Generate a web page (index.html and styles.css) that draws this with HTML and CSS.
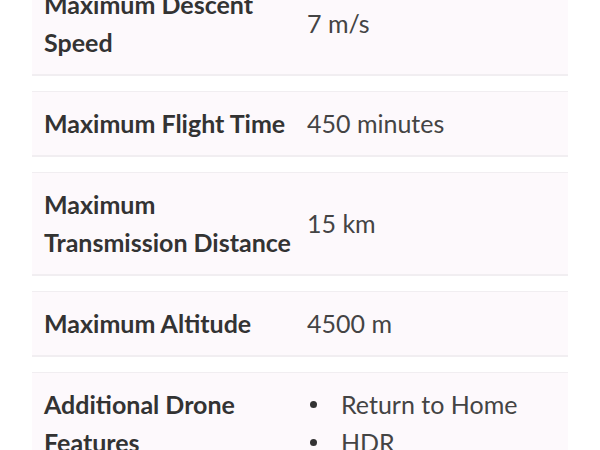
FILE: index.html
```html
<!DOCTYPE html>
<html lang="en">
  <head>
    <meta charset="UTF-8" />
    <meta name="viewport" content="width=device-width, initial-scale=1.0" />
    <title>Drone Specifications</title>
    <link rel="stylesheet" href="styles.css">
  </head>
  <body>
    <div class="specs">
      <div class="spec-row">
        <div class="spec-label">Maximum Descent Speed</div>
        <div class="spec-value">7 m/s</div>
      </div>
      <div class="spec-row">
        <div class="spec-label">Maximum Flight Time</div>
        <div class="spec-value">450 minutes</div>
      </div>
      <div class="spec-row">
        <div class="spec-label">Maximum Transmission Distance</div>
        <div class="spec-value">15 km</div>
      </div>
      <div class="spec-row">
        <div class="spec-label">Maximum Altitude</div>
        <div class="spec-value">4500 m</div>
      </div>
      <div class="spec-row">
        <div class="spec-label">Additional Drone Features</div>
        <div class="spec-value">
          <ul class="feature-list">
            <li>Return to Home</li>
            <li>HDR</li>
          </ul>
        </div>
      </div>
    </div>
  </body>
</html>
```

FILE: styles.css
```css
body {
  font-family: Lato, "Open Sans", sans-serif;
  margin: 0;
  background: #fff;
  overflow: hidden;
}
.specs {
  margin: -28px 32px 0 32px;
  display: flex;
  flex-direction: column;
  gap: 15px;
}
.spec-row {
  display: grid;
  grid-template-columns: 263px 1fr;
  align-items: center;
  background: #fdf9fc;
  border-top: 1px solid #f1eef1;
  border-bottom: 2px solid #f1eef1;
  padding: 12px 0 13px;
  font-size: 25px;
  line-height: 38px;
}
.spec-label {
  padding-left: 12px;
  font-weight: bold;
  color: #333;
}
.spec-value {
  padding-left: 12px;
  color: #444;
}
.feature-list {
  margin: 0;
  padding: 0;
  list-style: none;
}
.feature-list li {
  display: flex;
  align-items: center;
}
.feature-list li::before {
  content: "";
  width: 7px;
  height: 7px;
  border-radius: 50%;
  background: #333;
  margin: 0 24px 0 3px;
}
```
